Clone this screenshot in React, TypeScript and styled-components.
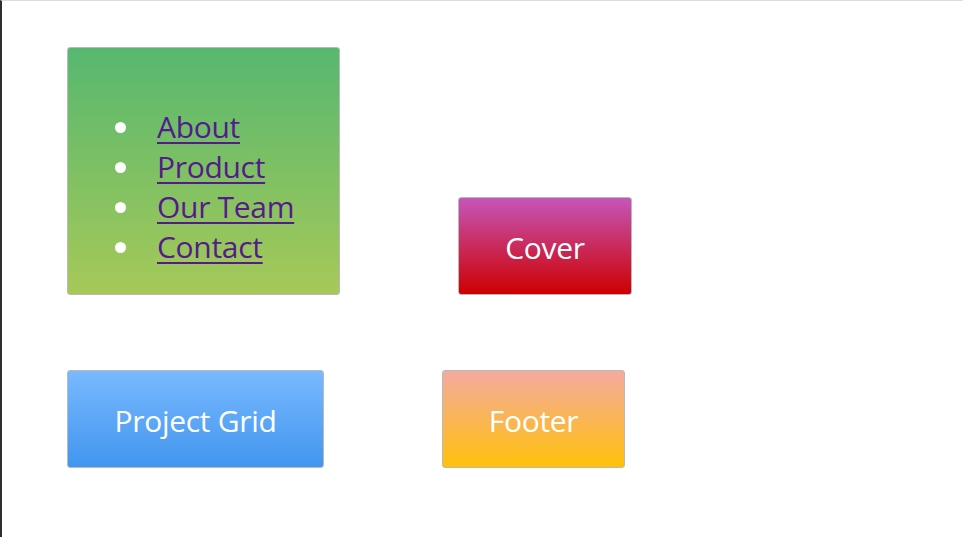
import React from "react";
import styled, { createGlobalStyle } from "styled-components";

const Global = createGlobalStyle`
  html, body { margin: 0; padding: 0; background: #fff; }
  body { font-family: "Open Sans", "Noto Sans", sans-serif; }
  * { box-sizing: border-box; }
`;

const Frame = styled.div`
  min-height: 100vh;
  border-top: 1px solid #dcdcdc;
  border-left: 2px solid #2e2e2e;
  padding: 46px 0 0 65px;
`;

const Row = styled.div<{ $gap: number; $top?: number }>`
  display: flex;
  align-items: flex-end;
  gap: ${(p) => p.$gap}px;
  margin-top: ${(p) => p.$top ?? 0}px;
`;

const Panel = styled.div<{ $w: number; $h: number; $from: string; $to: string }>`
  width: ${(p) => p.$w}px;
  height: ${(p) => p.$h}px;
  border: 1px solid #b9b9b9;
  border-radius: 3px;
  background: linear-gradient(to bottom, ${(p) => p.$from}, ${(p) => p.$to});
`;

const Block = styled(Panel)`
  display: flex;
  align-items: center;
  justify-content: center;
  padding-top: 3px;
  color: #fff;
  font-size: 30px;
  line-height: 40px;
  letter-spacing: -0.3px;
`;

const NavList = styled.ul`
  margin: 0;
  padding: 59px 0 0 47px;
  list-style: none;
  color: #fff;
  font-size: 30px;
  line-height: 40px;
  letter-spacing: -0.3px;
`;

const NavItem = styled.li`
  display: flex;
  align-items: center;
  &::before {
    content: "";
    flex: none;
    width: 11px;
    height: 11px;
    border-radius: 50%;
    background: #fff;
    margin: 0 31px 0 0;
  }
`;

const NavLink = styled.a`
  color: #551a8b;
  text-decoration: underline;
  text-underline-offset: 4px;
  text-decoration-thickness: 2px;
`;

const links = ["About", "Product", "Our Team", "Contact"];

export default function App() {
  return (
    <>
      <Global />
      <Frame>
        <Row $gap={118}>
          <Panel $w={273} $h={248} $from="#56b870" $to="#a6c958">
            <nav>
              <NavList>
                {links.map((l) => (
                  <NavItem key={l}>
                    <NavLink href="#">{l}</NavLink>
                  </NavItem>
                ))}
              </NavList>
            </nav>
          </Panel>
          <Block $w={174} $h={98} $from="#c556b9" $to="#cd0000">
            Cover
          </Block>
        </Row>
        <Row $gap={118} $top={75}>
          <Block $w={257} $h={98} $from="#79b9ff" $to="#4296ef">
            Project Grid
          </Block>
          <Block $w={183} $h={98} $from="#f4aa9f" $to="#ffc10a">
            Footer
          </Block>
        </Row>
      </Frame>
    </>
  );
}
